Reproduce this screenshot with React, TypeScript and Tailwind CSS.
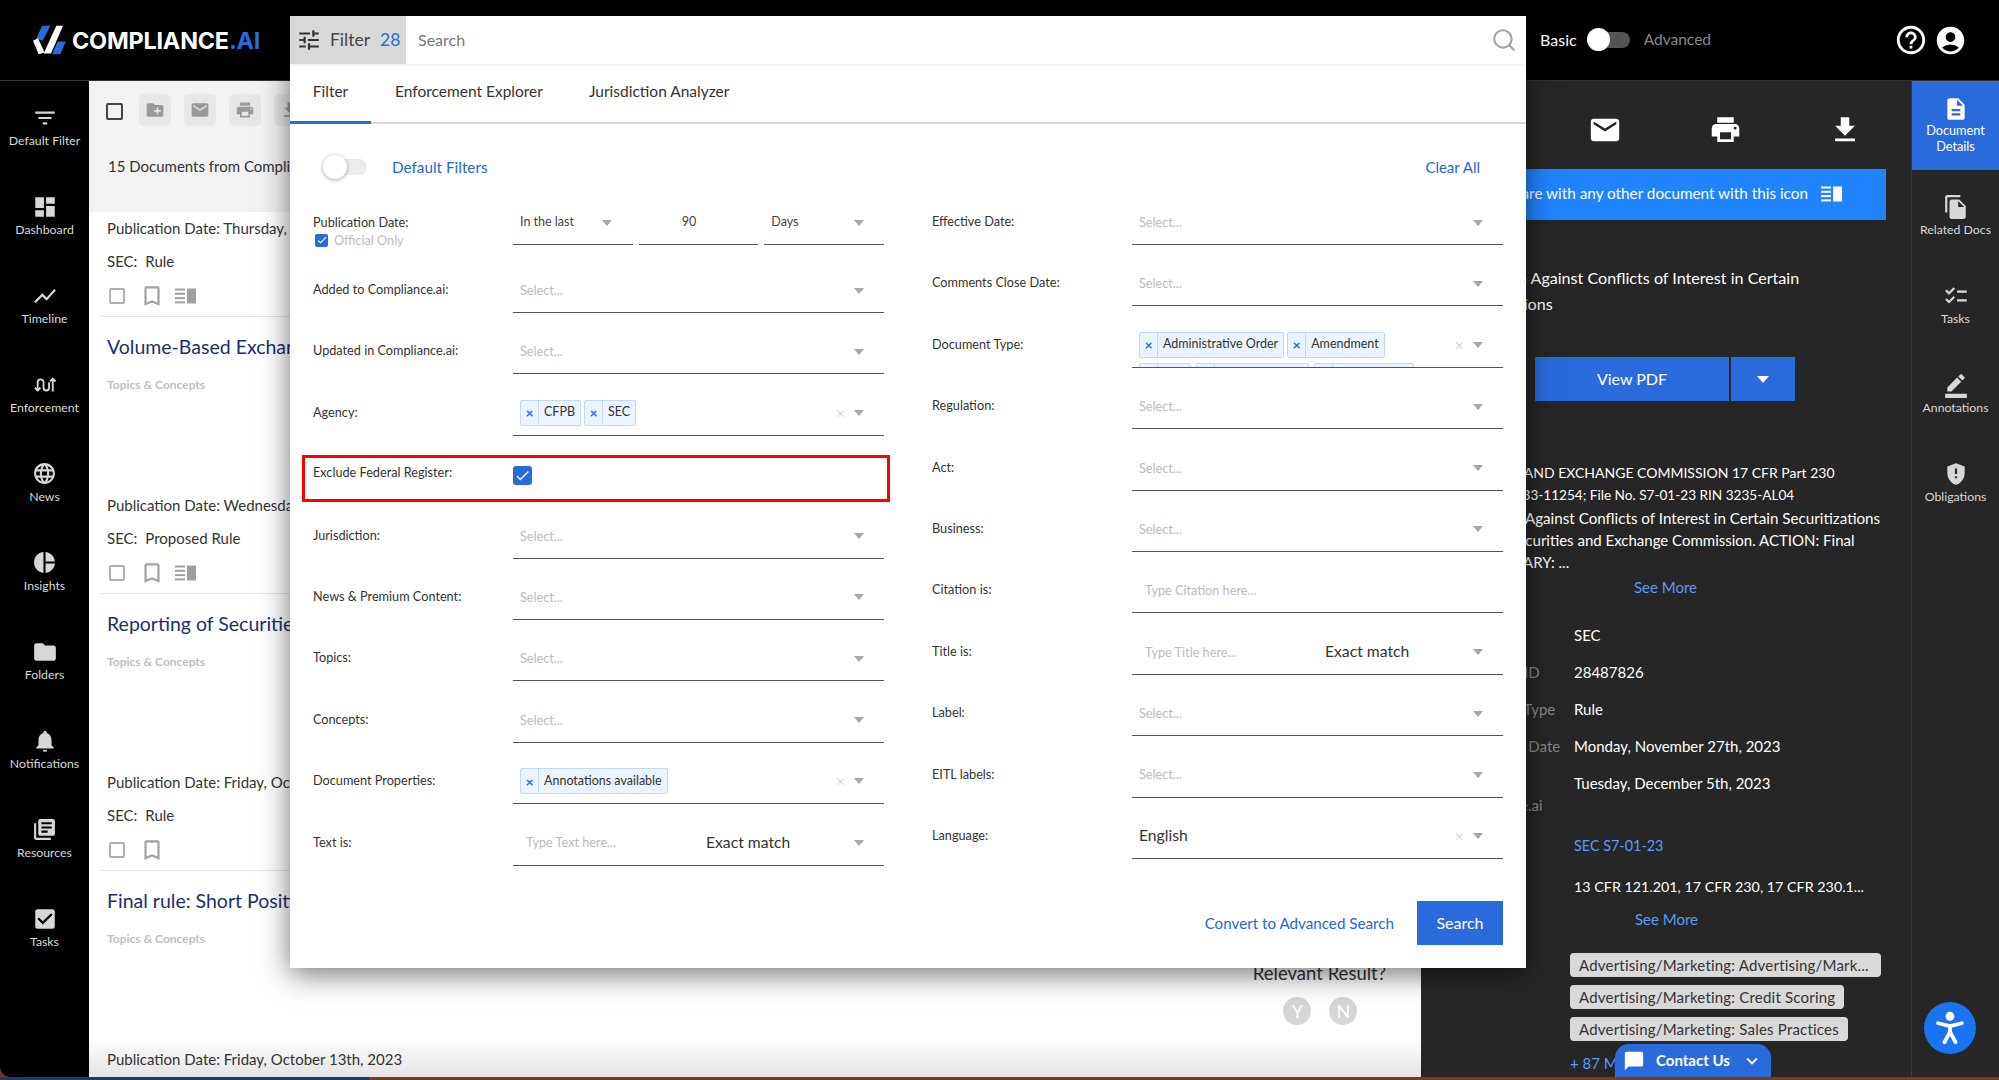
// App.tsx
import type { ReactNode } from "react";
import { Search } from "lucide-react";
import {
  MdAccountCircle,
  MdBookmarkBorder,
  MdBorderColor,
  MdChatBubble,
  MdCheck,
  MdChecklist,
  MdCheckBox,
  MdCreateNewFolder,
  MdDashboard,
  MdDescription,
  MdEmail,
  MdExpandMore,
  MdFileCopy,
  MdFileDownload,
  MdFilterList,
  MdFolder,
  MdGppMaybe,
  MdHelpOutline,
  MdLanguage,
  MdLibraryBooks,
  MdNotifications,
  MdPieChart,
  MdPrint,
  MdShowChart,
  MdTune,
} from "react-icons/md";

const font = "font-['Lato','Liberation_Sans',sans-serif]";

const CompareIcon = ({ className }: { className: string }) => (
  <svg viewBox="0 0 21 16" className={className} fill="currentColor">
    <rect x="0" y="0.5" width="10" height="2" />
    <rect x="0" y="4.8" width="10" height="2" />
    <rect x="0" y="9.1" width="10" height="2" />
    <rect x="0" y="13.4" width="10" height="2" />
    <rect x="12" y="0.5" width="9" height="15" />
  </svg>
);

const EnforcementIcon = () => (
  <svg viewBox="0 0 24 24" className="h-[22px] w-[22px]" fill="none" stroke="#d8d8d8" strokeWidth="2">
    <path d="M4 18V9a3.2 3.2 0 0 1 6.4 0v6a3 3 0 0 0 6 0V9" />
    <path d="M1 15l3 3 3-3" />
    <path d="M20.5 19V5M17.5 8l3-3 3 3" />
  </svg>
);

const Logo = () => (
  <svg viewBox="95 75 105 95" className="h-[32px] w-[35px] shrink-0">
    <polygon points="125,80 150,80 127,125 108,118" fill="#2a6bdc" />
    <polygon points="168,80 188,80 152,163 130,163" fill="#fff" />
    <polygon points="98,125 113,117 133,160 115,165" fill="#fff" />
    <polygon points="172,127 196,127 180,165 155,165" fill="#2a6bdc" />
  </svg>
);

const leftNav: { label: string; icon: ReactNode }[] = [
  { label: "Default Filter", icon: <MdFilterList size={26} /> },
  { label: "Dashboard", icon: <MdDashboard size={26} /> },
  { label: "Timeline", icon: <MdShowChart size={26} /> },
  { label: "Enforcement", icon: <EnforcementIcon /> },
  { label: "News", icon: <MdLanguage size={25} /> },
  { label: "Insights", icon: <MdPieChart size={25} /> },
  { label: "Folders", icon: <MdFolder size={26} /> },
  { label: "Notifications", icon: <MdNotifications size={26} /> },
  { label: "Resources", icon: <MdLibraryBooks size={25} /> },
  { label: "Tasks", icon: <MdCheckBox size={26} /> },
];

const rightNav: { label: string; icon: ReactNode }[] = [
  { label: "Related Docs", icon: <MdFileCopy size={26} /> },
  { label: "Tasks", icon: <MdChecklist size={26} /> },
  { label: "Annotations", icon: <MdBorderColor size={26} /> },
  { label: "Obligations", icon: <MdGppMaybe size={26} /> },
];

const docs = [
  { date: "Thursday, November 30th, 2023", type: "Rule", title: "Volume-Based Exchange Transaction Pricing for NMS Stocks", compare: true },
  { date: "Wednesday, November 29th, 2023", type: "Proposed Rule", title: "Reporting of Securities Loans and Short Sales", compare: true },
  { date: "Friday, October 13th, 2023", type: "Rule", title: "Final rule: Short Position and Short Activity Reporting", compare: false },
];

const Caret = () => (
  <svg viewBox="0 0 10 6" className="h-[6px] w-[10px] shrink-0" fill="#a8a8a8">
    <polygon points="0,0 10,0 5,6" />
  </svg>
);

const Clear = () => <span className="mr-[9px] text-[16px] font-light leading-none text-[#b5b5b5]">×</span>;

const Tag = ({ text }: { text: string }) => (
  <span className="flex h-[26px] shrink-0 items-center rounded-[2px] border border-[#c0d8fa] bg-[#ebf3fe] text-[12.5px] text-[#333]">
    <span className="flex h-full w-[18px] items-center justify-center border-r border-[#c0d8fa] text-[14px] font-bold text-[#2a6bdc]">×</span>
    <span className="px-[5px]">{text}</span>
  </span>
);

// second row of tags, only the top edge shows above the line
const TagStub = ({ w }: { w: string }) => (
  <span className={`flex h-[26px] shrink-0 rounded-[2px] border border-[#c0d8fa] bg-[#ebf3fe] ${w}`}>
    <span className="h-full w-[18px] border-r border-[#c0d8fa]" />
  </span>
);

const Row = ({ label, h = "h-[61.4px]", children }: { label: string; h?: string; children: ReactNode }) => (
  <div className={`flex items-end ${h}`}>
    <div className="flex h-[44px] w-[200px] shrink-0 items-start pt-[11px] text-[12.7px] leading-[18px] text-[#333]">{label}</div>
    <div className="min-w-0 flex-1">{children}</div>
  </div>
);

const Line = ({ children, box = "items-center pl-[7px] pr-[20px]" }: { children?: ReactNode; box?: string }) => (
  <div className={`flex h-[44px] overflow-hidden border-b-[1.5px] border-[#555] ${box}`}>{children}</div>
);

const SelectLine = () => (
  <Line>
    <span className="flex-1 text-[12.7px] text-[#bbb]">Select...</span>
    <Caret />
  </Line>
);

const TagLine = ({ tags, stubs }: { tags: string[]; stubs?: boolean }) => (
  <Line box="items-start pl-[7px] pr-[20px] pt-[8px]">
    <div className="flex flex-1 flex-col gap-[5px]">
      <div className="flex gap-[3px]">
        {tags.map((t) => (
          <Tag key={t} text={t} />
        ))}
      </div>
      {stubs && (
        <div className="flex gap-[5px]">
          <TagStub w="w-[52px]" />
          <TagStub w="w-[113px]" />
          <TagStub w="w-[100px]" />
        </div>
      )}
    </div>
    <div className="flex h-[26px] items-center">
      <Clear />
      <Caret />
    </div>
  </Line>
);

const MatchLine = ({ text }: { text: string }) => (
  <Line box="items-center pl-[13px] pr-[20px]">
    <span className="w-[180px] text-[12.7px] text-[#bbb]">{text}</span>
    <span className="flex-1 text-[15.7px] text-[#333]">Exact match</span>
    <Caret />
  </Line>
);

const ToolButton = ({ children }: { children: ReactNode }) => (
  <span className="flex h-[32px] w-[32px] items-center justify-center rounded-[5px] bg-[#e7e7e7] text-[#9a9a9a]">{children}</span>
);

const DocItem = ({ doc }: { doc: (typeof docs)[number] }) => (
  <div className="flex h-[277px] shrink-0 flex-col pl-[18px]">
    <div className="h-6 whitespace-nowrap text-[15px] leading-6 text-[#333]">Publication Date: {doc.date}</div>
    <div className="mt-[9px] flex h-6 gap-[8px] text-[15px] leading-6 text-[#333]">
      <span>SEC:</span>
      <span>{doc.type}</span>
    </div>
    <div className="mt-[13px] flex h-5 items-center text-[#a0a0a0]">
      <span className="ml-[2px] h-[16px] w-[16px] rounded-[2px] border-2 border-[#b0b0b0]" />
      <MdBookmarkBorder size={26} className="ml-[14px] shrink-0" />
      {doc.compare && <CompareIcon className="ml-[10px] h-[16px] w-[21px]" />}
    </div>
    <div className="-ml-[6px] mt-[10px] h-px shrink-0 bg-[#e4e4e4]" />
    <div className="mt-[17px] h-[26px] whitespace-nowrap text-[19.5px] leading-[26px] text-[#1c2f6b]">{doc.title}</div>
    <div className="mt-[15px] h-5 text-[12px] font-bold leading-5 text-[#c0c0c0]">Topics &amp; Concepts</div>
    <div className="mr-[35px] mt-[10px] flex flex-col items-center self-end">
      <div className="h-7 text-[18.5px] leading-7 text-[#333]">Relevant Result?</div>
      <div className="ml-[2px] mt-[10px] flex gap-[18px] text-[18px] text-white">
        <span className="flex h-[28px] w-[28px] items-center justify-center rounded-full bg-[#d6d6d6]">Y</span>
        <span className="flex h-[28px] w-[28px] items-center justify-center rounded-full bg-[#d6d6d6]">N</span>
      </div>
    </div>
  </div>
);

const meta = [
  { label: "Agency", value: "SEC" },
  { label: "Document ID", value: "28487826" },
  { label: "Document Type", value: "Rule" },
  { label: "Publication Date", value: "Monday, November 27th, 2023" },
];

const FilterModal = () => (
  <div className="absolute left-[290px] top-[16px] flex h-[952px] w-[1236px] flex-col bg-white shadow-[0_6px_28px_rgba(0,0,0,0.55)]">
    <div className="flex h-[48px] shrink-0 items-center shadow-[0_1px_3px_rgba(0,0,0,0.08)]">
      <div className="flex h-full w-[116px] items-center bg-[#d9d9d9] pl-[6px] text-[17.5px] text-[#444]">
        <MdTune size={26} className="text-[#333]" />
        <span className="ml-[8px]">Filter</span>
        <span className="ml-[10px] text-[#2a6bdc]">28</span>
      </div>
      <span className="ml-[12px] flex-1 text-[16px] text-[#777]">Search</span>
      <Search size={26} strokeWidth={2} className="mr-[9px] shrink-0 text-[#a5a5a5]" />
    </div>
    <div className="flex h-[60px] shrink-0 border-b-2 border-[#d8d8d8] pb-[2px] text-[15.5px] text-[#333]">
      <div className="-mb-[4px] flex w-[81px] items-center justify-center border-b-[3px] border-[#2a6bdc] pb-[2px]">Filter</div>
      <div className="ml-[24px] flex items-center">Enforcement Explorer</div>
      <div className="ml-[46px] flex items-center">Jurisdiction Analyzer</div>
    </div>
    <div className="flex h-[77px] shrink-0 items-center justify-between pl-[33px] pr-[46px] pt-[9px]">
      <div className="flex items-center">
        <div className="relative h-[16px] w-[37px] translate-x-[7px] rounded-full bg-[#ececec]">
          <span className="absolute -left-[7px] -top-[4px] h-[24px] w-[24px] rounded-full bg-white shadow-[0_1px_4px_rgba(0,0,0,0.35)]" />
        </div>
        <span className="ml-[32px] text-[15.3px] text-[#2666d9]">Default Filters</span>
      </div>
      <span className="text-[15px] text-[#2666d9]">Clear All</span>
    </div>
    <div className="grid grid-cols-2 gap-x-12 px-[23px]">
      <div className="flex flex-col">
        <div className="flex h-[44px] items-end">
          <div className="h-[44px] w-[200px] shrink-0 pt-[12px] text-[12.7px] leading-[18px] text-[#333]">
            Publication Date:
            <div className="flex items-center leading-[18px] text-[#bbb]">
              <span className="ml-[2px] mr-[6px] flex h-[13px] w-[13px] items-center justify-center rounded-[2px] bg-[#2a6bdc] text-white">
                <MdCheck size={12} />
              </span>
              Official Only
            </div>
          </div>
          <div className="flex flex-1 gap-[6px]">
            <div className="flex-1">
              <Line box="items-center pl-[7px] pr-[21px]">
                <span className="flex-1 text-[12.5px] text-[#444]">In the last</span>
                <Caret />
              </Line>
            </div>
            <div className="flex-1">
              <Line box="items-center justify-center pr-[19px]">
                <span className="text-[12.5px] text-[#444]">90</span>
              </Line>
            </div>
            <div className="flex-1">
              <Line>
                <span className="flex-1 text-[12.5px] text-[#444]">Days</span>
                <Caret />
              </Line>
            </div>
          </div>
        </div>
        <Row label="Added to Compliance.ai:" h="h-[68px]"><SelectLine /></Row>
        <Row label="Updated in Compliance.ai:"><SelectLine /></Row>
        <Row label="Agency:"><TagLine tags={["CFPB", "SEC"]} /></Row>
        <div className="h-[61.4px]">
          <div className="-ml-[11px] -mr-[6px] mt-[19px] flex h-[47px] border-[3px] border-[#ff0000] pl-[8px] pt-[5px]">
            <div className="w-[200px] shrink-0 text-[12.7px] leading-[18px] text-[#333]">Exclude Federal Register:</div>
            <span className="mt-[3px] flex h-[19px] w-[19px] items-center justify-center rounded-[3px] bg-[#2a6bdc] text-white">
              <MdCheck size={17} />
            </span>
          </div>
        </div>
        <Row label="Jurisdiction:"><SelectLine /></Row>
        <Row label="News & Premium Content:"><SelectLine /></Row>
        <Row label="Topics:"><SelectLine /></Row>
        <Row label="Concepts:"><SelectLine /></Row>
        <Row label="Document Properties:"><TagLine tags={["Annotations available"]} /></Row>
        <Row label="Text is:"><MatchLine text="Type Text here..." /></Row>
      </div>
      <div className="flex flex-col">
        <Row label="Effective Date:" h="h-[44px]"><SelectLine /></Row>
        <Row label="Comments Close Date:"><SelectLine /></Row>
        <Row label="Document Type:">
          <TagLine tags={["Administrative Order", "Amendment"]} stubs />
        </Row>
        <Row label="Regulation:"><SelectLine /></Row>
        <Row label="Act:"><SelectLine /></Row>
        <Row label="Business:"><SelectLine /></Row>
        <Row label="Citation is:">
          <Line box="items-center pl-[13px]"><span className="text-[12.7px] text-[#bbb]">Type Citation here...</span></Line>
        </Row>
        <Row label="Title is:"><MatchLine text="Type Title here..." /></Row>
        <Row label="Label:"><SelectLine /></Row>
        <Row label="EITL labels:"><SelectLine /></Row>
        <Row label="Language:">
          <Line>
            <span className="flex-1 pb-[2px] text-[15.7px] text-[#333]">English</span>
            <Clear />
            <Caret />
          </Line>
        </Row>
        <div className="mt-[42px] flex items-center justify-end gap-[23px]">
          <span className="text-[15.2px] text-[#2666d9]">Convert to Advanced Search</span>
          <span className="flex h-[44px] w-[86px] items-center justify-center bg-[#2a6bdc] text-[16px] text-white">Search</span>
        </div>
      </div>
    </div>
  </div>
);

const App = () => {
  return (
    <div className={`relative h-[1080px] w-[1999px] overflow-hidden bg-[#7a3a14] ${font}`}>
      <div className="absolute bottom-0 left-0 h-[3px] w-[369px] bg-[#1b3a73]" />
      <header className="flex h-[81px] items-center border-b border-[#333] bg-black">
        <div className="ml-[32px] flex items-center">
          <Logo />
          <span className="ml-[5px] mt-[1px] font-['Inter',sans-serif] text-[23.4px] font-bold tracking-[-0.2px] text-white">
            COMPLIANCE<span className="text-[#2a6bdc]">.AI</span>
          </span>
        </div>
        <div className="ml-auto flex items-center text-[16px]">
          <span className="text-white">Basic</span>
          <span className="relative ml-[10px] h-[16px] w-[38px] translate-x-[5px] rounded-full bg-[#555]">
            <span className="absolute -left-[5px] -top-[4px] h-[23px] w-[23px] rounded-full bg-white" />
          </span>
          <span className="ml-[19px] text-[15.5px] text-[#888]">Advanced</span>
          <MdHelpOutline size={34} className="ml-[183px] text-white" />
          <MdAccountCircle size={33} className="ml-[6px] mr-[32px] text-white" />
        </div>
      </header>
      <div className="relative flex h-[996px]">
        <nav className="flex w-[89px] shrink-0 flex-col rounded-bl-[10px] bg-black text-[#d8d8d8]">
          {leftNav.map((n) => (
            <div key={n.label} className="flex h-[89px] shrink-0 flex-col items-center justify-center pt-[4px]">
              <div className="flex h-[26px] items-center justify-center">{n.icon}</div>
              <span className="whitespace-nowrap text-[12.3px] leading-[20px]">{n.label}</span>
            </div>
          ))}
        </nav>
        <section className="relative w-[1332px] shrink-0 overflow-hidden bg-white">
          <div className="absolute inset-x-0 bottom-0 h-[40px] bg-gradient-to-t from-[#e4e4e4] to-transparent" />
          <div className="relative h-[131px] bg-[#f2f2f2] pl-[17px] pt-[13px]">
            <div className="flex items-center">
              <span className="mt-[2px] h-[17px] w-[17px] rounded-[2px] border-2 border-[#444]" />
              <div className="ml-[16px] flex gap-[13px]">
                <ToolButton><MdCreateNewFolder size={20} /></ToolButton>
                <ToolButton><MdEmail size={20} /></ToolButton>
                <ToolButton><MdPrint size={20} /></ToolButton>
                <ToolButton><MdFileDownload size={20} /></ToolButton>
              </div>
            </div>
            <div className="mt-[29px] pl-[2px] text-[15px] text-[#333]">15 Documents from Compliance.ai</div>
          </div>
          <div className="relative flex flex-col pt-[4px]">
            {docs.map((d) => (
              <DocItem key={d.date + d.title} doc={d} />
            ))}
            <div className="h-6 pl-[18px] text-[15px] leading-6 text-[#333]">Publication Date: Friday, October 13th, 2023</div>
          </div>
        </section>
        <section className="w-[490px] shrink-0 overflow-hidden bg-[#262626] text-[15px] text-white">
          <div className="mt-[32px] flex justify-end gap-[84px] pr-[48px]">
            <span className="flex w-[36px] justify-center"><MdEmail size={34} /></span>
            <span className="flex w-[36px] justify-center"><MdPrint size={33} /></span>
            <span className="flex w-[36px] justify-center"><MdFileDownload size={34} /></span>
          </div>
          <div className="mr-[25px] mt-[22px] flex h-[51px] items-center justify-end gap-[13px] bg-[#2084ff] pb-[2px] pr-[44px] text-[15.3px]">
            <span>Compare with any other document with this icon</span>
            <CompareIcon className="h-[16px] w-[21px]" />
          </div>
          <div className="ml-[28px] mt-[45px] w-[400px] text-[16.1px] leading-[26px]">
            Prohibition Against Conflicts of Interest in Certain Securitizations
          </div>
          <div className="ml-[114px] mt-[40px] flex h-[44px] gap-[2px] text-[16px]">
            <span className="flex w-[194px] items-center justify-center bg-[#2a6bdc]">View PDF</span>
            <span className="flex w-[64px] items-center justify-center bg-[#2a6bdc]">
              <svg viewBox="0 0 12 7" className="h-[7px] w-[12px]" fill="#fff"><polygon points="0,0 12,0 6,7" /></svg>
            </span>
          </div>
          <div className="mt-[61px] whitespace-nowrap leading-[22.3px]">
            <div className="ml-[24px] text-[14px]">SECURITIES AND EXCHANGE COMMISSION 17 CFR Part 230</div>
            <div className="ml-[28px] text-[13.6px]">Release No. 33-11254; File No. S7-01-23 RIN 3235-AL04</div>
            <div className="ml-[27px] text-[15.2px]">Prohibition Against Conflicts of Interest in Certain Securitizations</div>
            <div className="ml-[21px]">AGENCY: Securities and Exchange Commission. ACTION: Final</div>
            <div className="ml-[55px]">SUMMARY: ...</div>
          </div>
          <div className="ml-[213px] mt-[2.5px] leading-[22px] text-[#5b9bf5]">See More</div>
          <div className="mt-[19px]">
            {meta.map((m) => (
              <div key={m.label} className="flex h-[37px] items-center">
                <span className="w-[153px] shrink-0 pl-[30px] text-[#888]">{m.label}</span>
                <span>{m.value}</span>
              </div>
            ))}
            <div className="flex h-[37px]">
              <span className="w-[153px] shrink-0 pl-[30px] pt-[7.5px] leading-[22px] text-[#888]">Added to Compliance.ai</span>
              <span className="pt-[7.5px] leading-[22px]">Tuesday, December 5th, 2023</span>
            </div>
            <div className="mt-[25px] flex h-[37px] items-center">
              <span className="w-[153px] shrink-0 pl-[30px] text-[#888]">Docket ID</span>
              <span className="text-[14.4px] text-[#5b9bf5]">SEC S7-01-23</span>
            </div>
            <div className="mt-[4px] flex h-[37px] items-center">
              <span className="w-[153px] shrink-0 pl-[30px] text-[#888]">CFR</span>
              <span className="text-[14.3px]">13 CFR 121.201, 17 CFR 230, 17 CFR 230.1...</span>
            </div>
          </div>
          <div className="ml-[214px] mt-[3.5px] leading-[22px] text-[#5b9bf5]">See More</div>
          <div className="ml-[149px] mt-[23px] flex flex-col items-start gap-[8px] text-[15px] text-[#333]">
            <span className="flex h-[24px] w-[311px] items-center rounded-[4px] bg-[#d9d9d9] px-[9px] tracking-[0.2px]">Advertising/Marketing: Advertising/Mark...</span>
            <span className="flex h-[24px] items-center rounded-[4px] bg-[#d9d9d9] px-[9px] tracking-[0.2px]">Advertising/Marketing: Credit Scoring</span>
            <span className="flex h-[24px] items-center rounded-[4px] bg-[#d9d9d9] px-[9px] tracking-[0.2px]">Advertising/Marketing: Sales Practices</span>
          </div>
          <div className="ml-[149px] mt-[11px] leading-[22px] text-[#5b9bf5]">+ 87 More</div>
        </section>
        <nav className="flex w-[88px] shrink-0 flex-col border-l border-[#3a3a3a] bg-[#262626] text-[#d8d8d8]">
          <div className="flex h-[89px] shrink-0 flex-col items-center justify-center bg-[#2a6bdc] pb-[2px] text-white">
            <MdDescription size={26} />
            <span className="text-center text-[12.7px] leading-[16px]">Document<br />Details</span>
          </div>
          {rightNav.map((n) => (
            <div key={n.label} className="flex h-[89px] shrink-0 flex-col items-center justify-center pt-[4px]">
              {n.icon}
              <span className="whitespace-nowrap text-[12.3px] leading-[20px]">{n.label}</span>
            </div>
          ))}
        </nav>
        <div className="absolute bottom-0 left-[1615px] flex h-[33px] w-[156px] items-center rounded-t-[14px] bg-[#2a6bdc] pl-[8px] pr-[8px] text-[15px] font-bold text-white">
          <MdChatBubble size={22} className="text-white" />
          <span className="ml-[11px] flex-1">Contact Us</span>
          <MdExpandMore size={22} />
        </div>
        <div className="absolute bottom-[23px] left-[1924px] flex h-[52px] w-[52px] items-center justify-center rounded-full bg-[#1a73f0]">
          <svg viewBox="0 0 24 24" className="h-[38px] w-[38px]" fill="none" stroke="#fff" strokeWidth="2.4" strokeLinecap="round" strokeLinejoin="round">
            <circle cx="12" cy="4.6" r="1.6" fill="#fff" />
            <path d="M4.5 9L12 10.8 19.5 9M12 10.8V14.5M12 14.5L8.5 21M12 14.5L15.5 21" />
          </svg>
        </div>
      </div>
      <FilterModal />
    </div>
  );
};

export default App;
